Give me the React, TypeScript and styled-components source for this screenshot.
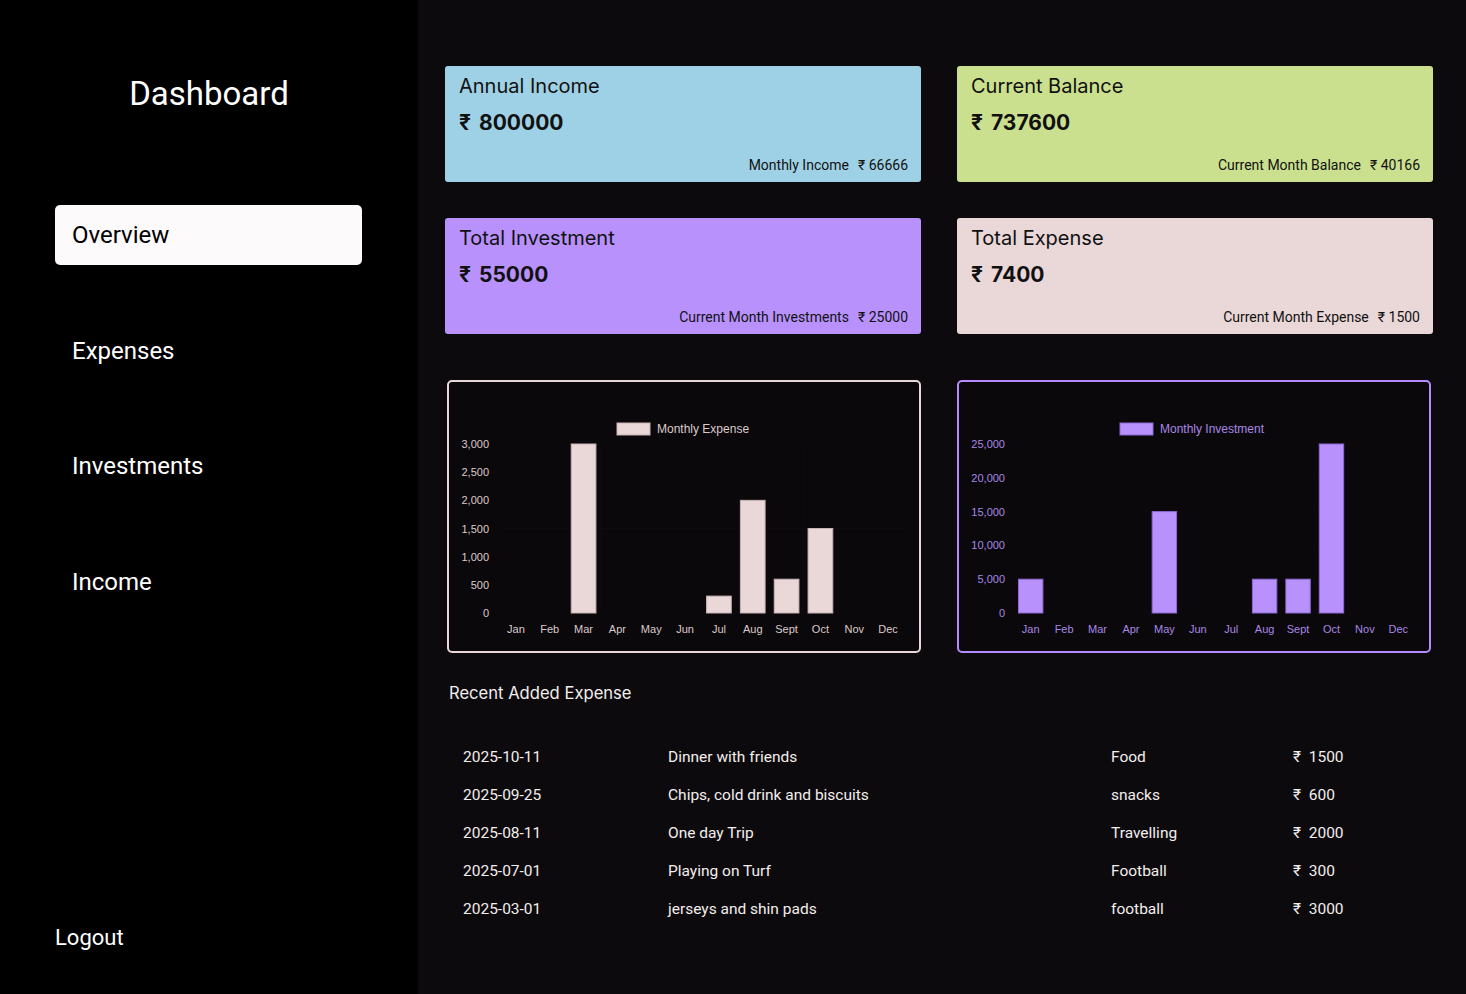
import styled, { createGlobalStyle } from 'styled-components';

const GlobalStyle = createGlobalStyle`
  * { box-sizing: border-box; }
  body {
    margin: 0;
    background: #0c0a0d;
    font-family: Roboto, "Noto Sans", sans-serif;
  }
`;

const MONTHS = ['Jan', 'Feb', 'Mar', 'Apr', 'May', 'Jun', 'Jul', 'Aug', 'Sept', 'Oct', 'Nov', 'Dec'];

const expenseData = [0, 0, 3000, 0, 0, 0, 300, 2000, 600, 1500, 0, 0];
const investmentData = [5000, 0, 0, 0, 15000, 0, 0, 5000, 5000, 25000, 0, 0];

const cards = [
  { title: 'Annual Income', value: '800000', label: 'Monthly Income', sub: '66666', bg: '#9fd1e6' },
  { title: 'Current Balance', value: '737600', label: 'Current Month Balance', sub: '40166', bg: '#cbe08f' },
  { title: 'Total Investment', value: '55000', label: 'Current Month Investments', sub: '25000', bg: '#b891fd' },
  { title: 'Total Expense', value: '7400', label: 'Current Month Expense', sub: '1500', bg: '#ead7d8' },
];

const expenses = [
  { date: '2025-10-11', desc: 'Dinner with friends', cat: 'Food', amount: '1500' },
  { date: '2025-09-25', desc: 'Chips, cold drink and biscuits', cat: 'snacks', amount: '600' },
  { date: '2025-08-11', desc: 'One day Trip', cat: 'Travelling', amount: '2000' },
  { date: '2025-07-01', desc: 'Playing on Turf', cat: 'Football', amount: '300' },
  { date: '2025-03-01', desc: 'jerseys and shin pads', cat: 'football', amount: '3000' },
];

type ChartProps = {
  data: number[];
  max: number;
  step: number;
  fill: string;
  stroke: string;
  text: string;
  legend: string;
  legendX: number;
  plotLeft: number;
  axisRight: number;
};

// inner drawing size of the chart panel (panel minus its 2px border)
const W = 470;
const H = 269;
const TOP = 62;
const BOTTOM = 231;
const PLOT_RIGHT = 456;

const BarChart = ({ data, max, step, fill, stroke, text, legend, legendX, plotLeft, axisRight }: ChartProps) => {
  const cat = (PLOT_RIGHT - plotLeft) / data.length;
  const barW = cat * 0.73;
  const y = (v: number) => BOTTOM - (v / max) * (BOTTOM - TOP);
  const ticks: number[] = [];
  for (let v = 0; v <= max; v += step) ticks.push(v);

  return (
    <ChartSvg width={W} height={H} viewBox={`0 0 ${W} ${H}`}>
      <rect x={legendX} y={41} width={33} height={12} fill={fill} stroke={stroke} strokeWidth={1} />
      <text x={legendX + 40} y={51} fill={text} fontSize={12}>{legend}</text>

      {ticks.map((t) => (
        <g key={t}>
          <line x1={plotLeft} x2={PLOT_RIGHT} y1={y(t)} y2={y(t)} stroke="rgba(255,255,255,0.015)" />
          <text x={axisRight} y={y(t) + 4} fill={text} fontSize={11} textAnchor="end">
            {t.toLocaleString('en-US')}
          </text>
        </g>
      ))}
      {data.map((_, i) => (
        <line key={i} x1={plotLeft + cat * i} x2={plotLeft + cat * i} y1={TOP} y2={BOTTOM} stroke="rgba(255,255,255,0.012)" />
      ))}

      {data.map((v, i) =>
        v > 0 ? (
          <rect
            key={i}
            x={plotLeft + cat * i + (cat - barW) / 2}
            y={y(v)}
            width={barW}
            height={BOTTOM - y(v)}
            fill={fill}
            stroke={stroke}
            strokeWidth={1}
          />
        ) : null
      )}

      {MONTHS.map((m, i) => (
        <text key={m} x={plotLeft + cat * i + cat / 2} y={251} fill={text} fontSize={11} textAnchor="middle">
          {m}
        </text>
      ))}
    </ChartSvg>
  );
};

const App = () => {
  return (
    <>
      <GlobalStyle />
      <Page>
        <Sidebar>
          <Brand>Dashboard</Brand>
          <Nav>
            <NavItem $active>Overview</NavItem>
            <NavItem>Expenses</NavItem>
            <NavItem>Investments</NavItem>
            <NavItem>Income</NavItem>
          </Nav>
          <Logout>Logout</Logout>
        </Sidebar>

        <Main>
          <CardGrid>
            {cards.map((c) => (
              <Card key={c.title} $bg={c.bg}>
                <CardTitle>{c.title}</CardTitle>
                <CardValue>
                  <Rupee>₹</Rupee>
                  {c.value}
                </CardValue>
                <CardFooter>
                  {c.label}
                  <FooterValue>₹ {c.sub}</FooterValue>
                </CardFooter>
              </Card>
            ))}
          </CardGrid>

          <ChartGrid>
            <ChartPanel $border="#ead7d8">
              <BarChart
                data={expenseData}
                max={3000}
                step={500}
                fill="#ead7d8"
                stroke="#c9b3b4"
                text="#ddcaca"
                legend="Monthly Expense"
                legendX={168}
                plotLeft={50}
                axisRight={40}
              />
            </ChartPanel>
            <ChartPanel $border="#b48cff">
              <BarChart
                data={investmentData}
                max={25000}
                step={5000}
                fill="#b891fd"
                stroke="#8e68d6"
                text="#a987e6"
                legend="Monthly Investment"
                legendX={161}
                plotLeft={55}
                axisRight={46}
              />
            </ChartPanel>
          </ChartGrid>

          <SectionTitle>Recent Added Expense</SectionTitle>
          <Table>
            {expenses.map((e) => (
              <Row key={e.date}>
                <span>{e.date}</span>
                <span>{e.desc}</span>
                <span>{e.cat}</span>
                <span>₹&nbsp; {e.amount}</span>
              </Row>
            ))}
          </Table>
        </Main>
      </Page>
    </>
  );
};

export default App;

const Page = styled.div`
  display: grid;
  grid-template-columns: 418px 1fr;
  min-height: 100vh;
`;

const Sidebar = styled.aside`
  background: #000;
  display: flex;
  flex-direction: column;
  height: 994px;
`;

const Brand = styled.h1`
  margin: 75px 0 0;
  text-align: center;
  color: #fff;
  font-size: 33px;
  line-height: 38px;
  font-weight: 400;
`;

const Nav = styled.nav`
  display: flex;
  flex-direction: column;
  gap: 55.5px;
  margin-top: 92px;
  padding-left: 55px;
`;

const NavItem = styled.div<{ $active?: boolean }>`
  width: 307px;
  height: 60px;
  display: flex;
  align-items: center;
  padding-left: 17px;
  border-radius: 5px;
  font-size: 24px;
  color: ${(p) => (p.$active ? '#000' : '#fff')};
  background: ${(p) => (p.$active ? '#fcfafb' : 'transparent')};
`;

const Logout = styled.div`
  margin-top: auto;
  margin-bottom: 43px;
  padding-left: 55px;
  color: #fff;
  font-size: 22px;
  line-height: 26px;
`;

const Main = styled.main`
  padding: 66px 33px 0 27px;
  background: #0c0a0d;
`;

const CardGrid = styled.div`
  display: grid;
  grid-template-columns: repeat(2, 476px);
  gap: 36px;
`;

const Card = styled.div<{ $bg: string }>`
  height: 116px;
  background: ${(p) => p.$bg};
  border-radius: 3px;
  padding: 7px 13px 8px 14px;
  display: flex;
  flex-direction: column;
  color: #111;
`;

const CardTitle = styled.div`
  font-family: Inter, "Noto Sans", sans-serif;
  font-size: 20px;
  line-height: 26px;
`;

const CardValue = styled.div`
  margin-top: 11px;
  font-family: Inter, "Noto Sans", sans-serif;
  font-size: 21px;
  line-height: 26px;
  font-weight: 700;
`;

const Rupee = styled.span`
  margin-right: 8px;
`;

const CardFooter = styled.div`
  margin-top: auto;
  align-self: flex-end;
  font-size: 14px;
  line-height: 18px;
`;

const FooterValue = styled.span`
  margin-left: 9px;
`;

const ChartGrid = styled.div`
  display: grid;
  grid-template-columns: 476px 474px;
  gap: 36px;
  margin-top: 46px;
`;

const ChartPanel = styled.div<{ $border: string }>`
  width: 474px;
  height: 273px;
  justify-self: end;
  border: 2px solid ${(p) => p.$border};
  border-radius: 5px;
  background: #0a080b;
`;

const ChartSvg = styled.svg`
  display: block;
  font-family: "Liberation Sans", Arial, sans-serif;
`;

const SectionTitle = styled.h2`
  margin: 29px 0 0 4px;
  color: #f3eeee;
  font-family: Inter, "Noto Sans", sans-serif;
  font-size: 16.6px;
  line-height: 22px;
  font-weight: 400;
`;

const Table = styled.div`
  margin-top: 34px;
  padding-left: 18px;
`;

const Row = styled.div`
  display: grid;
  grid-template-columns: 205px 443px 182px auto;
  height: 38px;
  align-items: center;
  color: #f3eeee;
  font-size: 15.5px;
`;
